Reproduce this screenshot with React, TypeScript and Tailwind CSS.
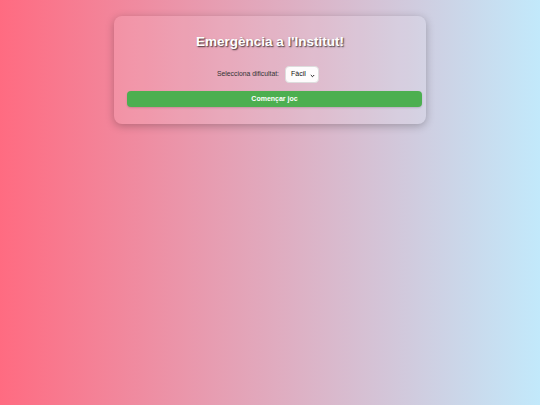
export default function App() {
  return (
    <div
      className="w-[540px] h-[405px] flex flex-col items-center pt-[16px] bg-[linear-gradient(to_right,#ff6b81,#c2e9fb)]"
      style={{ fontFamily: '"Liberation Sans", Arial, sans-serif' }}
    >
      <div className="w-[312px] h-[108px] rounded-[8px] bg-white/10 shadow-[0_2px_8px_rgba(0,0,0,0.25)] pl-[13px] pt-[18px] flex flex-col">
        <h1 className="w-[286px] text-center text-[13.5px] leading-[16px] font-bold text-white [text-shadow:1px_1px_1.5px_rgba(0,0,0,0.75)]">
          Emergència a l'Institut!
        </h1>
        <div className="w-[286px] mt-[16px] pr-[4px] flex items-center justify-center gap-[6px]">
          <label className="text-[6.8px] text-[#333]">Selecciona dificultat:</label>
          <div className="relative h-[17px] w-[34px] rounded-[4px] bg-white/95 border border-[#ddd] flex items-center pl-[5px]">
            <span className="text-[7px] text-[#111]">Fàcil</span>
            <svg className="absolute right-[2.5px] top-[6.5px]" width="5" height="4" viewBox="0 0 5 4">
              <path d="M0.8 1 L2.5 2.7 L4.2 1" fill="none" stroke="#222" strokeWidth="1" />
            </svg>
          </div>
        </div>
        <button
          type="button"
          className="mt-[8px] w-[295px] h-[16px] rounded-[4px] bg-[#4caf50] text-white text-[7px] font-bold flex items-center justify-center shadow-[0_1px_2px_rgba(0,0,0,0.15)]"
        >
          Començar joc
        </button>
      </div>
    </div>
  );
}
